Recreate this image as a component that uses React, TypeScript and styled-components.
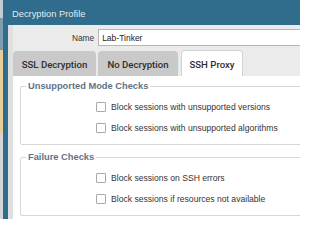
import { createGlobalStyle } from "styled-components";
import styled from "styled-components";

const Global = createGlobalStyle`
  html, body { margin: 0; padding: 0; background: #ffffff; }
  * { box-sizing: border-box; }
`;

// ─── Frame ────────────────────────────
const Page = styled.div`
  display: flex;
  width: 300px;
  height: 219px;
  overflow: hidden;
  font-family: "Liberation Sans", Arial, sans-serif;
`;

const Backdrop = styled.div`
  width: 3px;
  flex-shrink: 0;
  background: linear-gradient(
    180deg,
    #c2ccd4 0px, #c2ccd4 18px,
    #7f9db0 18px, #7f9db0 50px,
    #e8cd98 50px, #e8cd98 133px,
    #d6d6d6 133px
  );
`;

const Dialog = styled.div`
  flex: 1;
  display: flex;
  flex-direction: column;
  background: #306c8b;
  padding-left: 5px;
  min-width: 0;
`;

const TitleBar = styled.div`
  height: 25px;
  flex-shrink: 0;
  display: flex;
  align-items: center;
  padding: 3px 0 0 4px;
  font-size: 9.3px;
  color: #e3ebf0;
`;

const Body = styled.div`
  flex: 1;
  display: flex;
  flex-direction: column;
  background: #ebebeb;
  border-left: 5px solid #e0e0e0;
  min-width: 0;
`;

// ─── Name row ────────────────────────────
const NameRow = styled.div`
  height: 25px;
  flex-shrink: 0;
  display: flex;
  align-items: center;
  gap: 4px;
  padding-left: 59px;
`;

const NameLabel = styled.label`
  font-size: 8.3px;
  color: #333;
`;

const NameInput = styled.input`
  flex: 1;
  min-width: 0;
  height: 17px;
  margin-right: -20px;
  border: 1px solid #b5b5b5;
  background: #fff;
  font-family: inherit;
  font-size: 8.5px;
  color: #222;
  padding: 0 3px;
  outline: none;
`;

// ─── Tabs ────────────────────────────
const TabBar = styled.div`
  display: flex;
  align-items: flex-end;
  flex-shrink: 0;
  gap: 2px;
  height: 26px;
`;

const Tab = styled.div<{ $active?: boolean; $w: number }>`
  width: ${(p) => p.$w}px;
  flex-shrink: 0;
  height: ${(p) => (p.$active ? 26 : 25)}px;
  margin-left: ${(p) => (p.$active ? 1 : 0)}px;
  display: flex;
  align-items: center;
  justify-content: center;
  white-space: nowrap;
  border-radius: 4px 4px 0 0;
  background: ${(p) => (p.$active ? "#fff" : "#c9c9c9")};
  border: ${(p) => (p.$active ? "1px solid #d2d2d2" : "none")};
  border-bottom: none;
  font-family: Roboto, "Liberation Sans", sans-serif;
  font-size: 9.6px;
  font-weight: 500;
  color: #2e2e2e;
  padding-top: 1px;
`;

const Panel = styled.div`
  flex: 1;
  background: #fff;
  padding: 4px 0 0 7px;
  display: flex;
  flex-direction: column;
  gap: 6px;
`;

// ─── Fieldsets ────────────────────────────
const Group = styled.fieldset`
  margin: 0 -20px 0 0;
  padding: 3px 0 6px 0;
  border: 1px solid #d6d6d6;
  border-radius: 2px;
  min-width: 0;
`;

const Legend = styled.legend`
  margin-left: 5px;
  padding: 0 2px;
  font-size: 9.3px;
  line-height: 13px;
  font-weight: 700;
  color: #5f7386;
`;

const CheckRow = styled.div`
  display: flex;
  align-items: center;
  gap: 5px;
  height: 21px;
  font-size: 8.6px;
  color: #333;
  white-space: nowrap;
`;

const Box = styled.span`
  width: 10px;
  height: 10px;
  margin-left: 75px;
  flex-shrink: 0;
  border: 1px solid #a9a9a9;
  border-radius: 1px;
  background: #fff;
`;

export default function App() {
  return (
    <>
      <Global />
      <Page>
        <Backdrop />
        <Dialog>
          <TitleBar>Decryption Profile</TitleBar>
          <Body>
            <NameRow>
              <NameLabel>Name</NameLabel>
              <NameInput defaultValue="Lab-Tinker" />
            </NameRow>

            <TabBar>
              <Tab $w={83}>SSL Decryption</Tab>
              <Tab $w={80}>No Decryption</Tab>
              <Tab $w={62} $active>SSH Proxy</Tab>
            </TabBar>

            <Panel>
              <Group>
                <Legend>Unsupported Mode Checks</Legend>
                <CheckRow><Box />Block sessions with unsupported versions</CheckRow>
                <CheckRow><Box />Block sessions with unsupported algorithms</CheckRow>
              </Group>
              <Group>
                <Legend>Failure Checks</Legend>
                <CheckRow><Box />Block sessions on SSH errors</CheckRow>
                <CheckRow><Box />Block sessions if resources not available</CheckRow>
              </Group>
            </Panel>
          </Body>
        </Dialog>
      </Page>
    </>
  );
}
